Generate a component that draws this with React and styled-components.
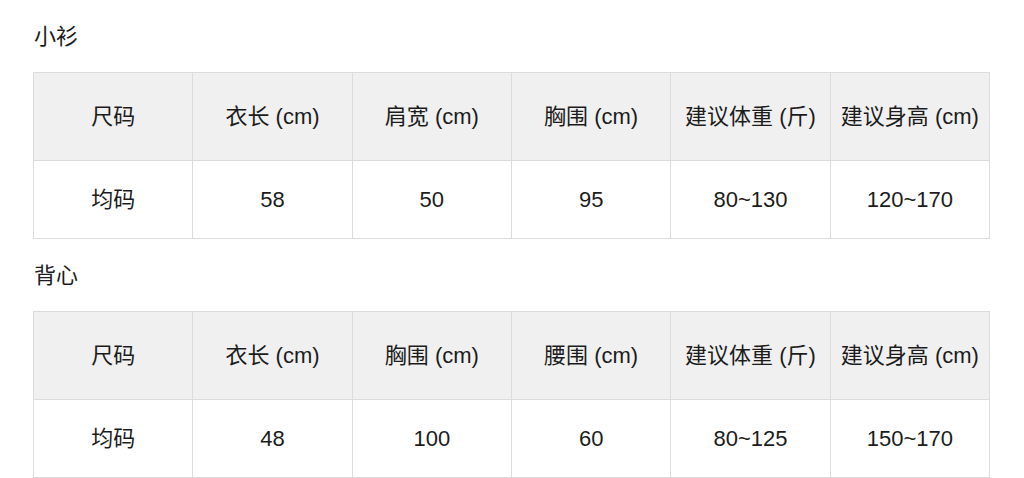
import React from 'react';
import styled, { createGlobalStyle } from 'styled-components';

const GlobalStyle = createGlobalStyle`
body {
    margin: 0;
    background: #fff;
    font-family: "Liberation Sans", "Noto Sans CJK SC", sans-serif;
    color: #1c1c1c;
}
`

const Page = styled.div`
padding: 0 34px 0 33px;
`

const SectionTitle = styled.h2`
margin: 23px 0 21px 1px;
font-size: 22px;
line-height: 28px;
font-weight: 400;
`

const SizeTable = styled.table`
width: 957px;
border-collapse: collapse;
table-layout: fixed;
`

const HeadCell = styled.th`
height: 87px;
padding: 0;
border: 1px solid #dcdcdc;
background: #f0f0f0;
font-size: 22px;
line-height: 24px;
font-weight: 400;
text-align: center;
white-space: nowrap;
`

const BodyCell = styled.td`
height: 77px;
padding: 0;
border: 1px solid #dcdcdc;
font-size: 22px;
line-height: 24px;
text-align: center;
`

const charts = [
    {
        title: "小衫",
        head: ["尺码", "衣长 (cm)", "肩宽 (cm)", "胸围 (cm)", "建议体重 (斤)", "建议身高 (cm)"],
        row: ["均码", "58", "50", "95", "80~130", "120~170"],
    },
    {
        title: "背心",
        head: ["尺码", "衣长 (cm)", "胸围 (cm)", "腰围 (cm)", "建议体重 (斤)", "建议身高 (cm)"],
        row: ["均码", "48", "100", "60", "80~125", "150~170"],
    },
]

const SizeChart = ({ title, head, row }) => (
    <>
        <SectionTitle>{title}</SectionTitle>
        <SizeTable>
            <thead>
                <tr>
                    {head.map((h) => <HeadCell key={h}>{h}</HeadCell>)}
                </tr>
            </thead>
            <tbody>
                <tr>
                    {row.map((v, i) => <BodyCell key={i}>{v}</BodyCell>)}
                </tr>
            </tbody>
        </SizeTable>
    </>
)

const App = () => (
    <Page>
        <GlobalStyle />
        {charts.map((c) => <SizeChart key={c.title} {...c} />)}
    </Page>
)

export default App
